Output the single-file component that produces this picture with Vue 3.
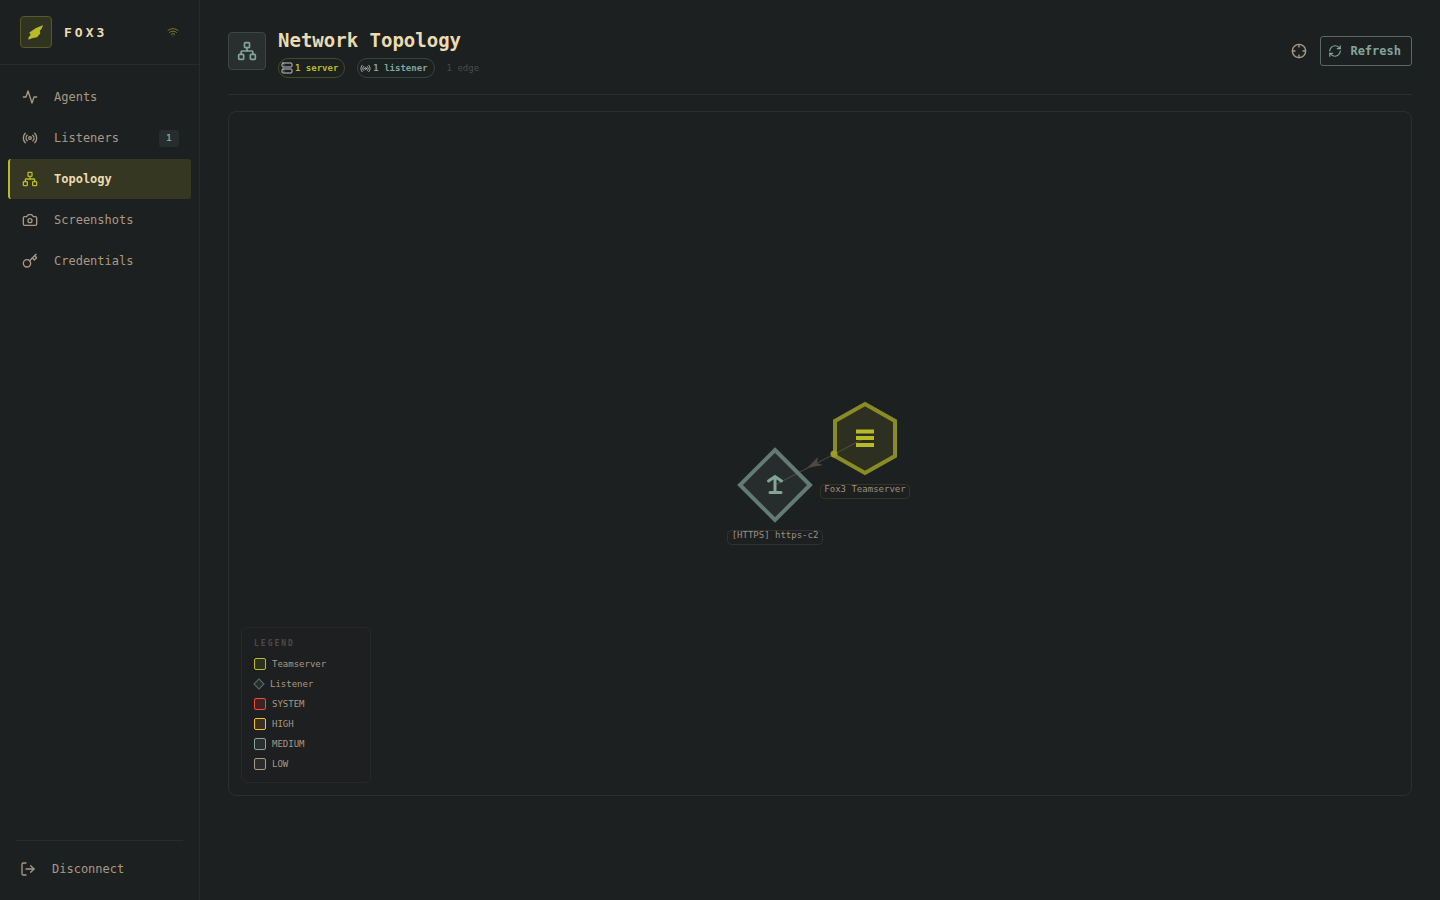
<template>
  <div class="layout">
    <aside class="sidebar">
      <div class="brand">
        <span class="brand-logo">
          <svg width="18" height="18" viewBox="0 0 18 18" aria-hidden="true">
            <path d="M16 2 13.500 3.200 9 5 6 7 2.300 9.500 3.600 12 1.500 14.500V16.800L5 15.300 10 14.300 13.300 10.500 12.800 8 15 5z" fill="#b8bb26" />
          </svg>
        </span>
        <span class="brand-name">FOX3</span>
        <svg class="icon brand-status" width="12" height="12" viewBox="0 0 24 24" aria-hidden="true">
          <path v-for="d in icons.wifi" :key="d" :d="d" />
        </svg>
      </div>

      <nav class="nav">
        <a
          v-for="item in navItems"
          :key="item.label"
          href="#"
          class="nav-item"
          :class="{ active: item.label === activePage }"
          @click.prevent="activePage = item.label"
        >
          <svg class="icon" width="16" height="16" viewBox="0 0 24 24" aria-hidden="true">
            <path v-for="d in icons[item.icon]" :key="d" :d="d" />
          </svg>
          <span>{{ item.label }}</span>
          <span v-if="item.count" class="nav-count">{{ item.count }}</span>
        </a>
      </nav>

      <div class="sidebar-footer">
        <button type="button" class="disconnect">
          <svg class="icon" width="16" height="16" viewBox="0 0 24 24" aria-hidden="true">
            <path v-for="d in icons.logout" :key="d" :d="d" />
          </svg>
          <span>Disconnect</span>
        </button>
      </div>
    </aside>

    <main class="content">
      <header class="page-header">
        <span class="page-icon">
          <svg class="icon" width="20" height="20" viewBox="0 0 24 24" aria-hidden="true">
            <path v-for="d in icons.network" :key="d" :d="d" />
          </svg>
        </span>
        <div class="page-heading">
          <h1>Network Topology</h1>
          <div class="stats">
            <span class="stat server">
              <svg class="icon" width="12" height="12" viewBox="0 0 24 24" aria-hidden="true">
                <path v-for="d in icons.server" :key="d" :d="d" />
              </svg>
              1 server
            </span>
            <span class="stat listener">
              <svg class="icon" width="11" height="11" viewBox="0 0 24 24" aria-hidden="true">
                <path v-for="d in icons.radio" :key="d" :d="d" />
              </svg>
              1 listener
            </span>
            <span class="edges">1 edge</span>
          </div>
        </div>
        <button type="button" class="center-btn" aria-label="Center graph">
          <svg class="icon" width="16" height="16" viewBox="0 0 24 24" aria-hidden="true">
            <path v-for="d in icons.crosshair" :key="d" :d="d" />
          </svg>
        </button>
        <button type="button" class="refresh-btn">
          <svg class="icon" width="14" height="14" viewBox="0 0 24 24" aria-hidden="true">
            <path v-for="d in icons.refresh" :key="d" :d="d" />
          </svg>
          Refresh
        </button>
      </header>

      <section class="graph">
        <!-- nodes are placed around the middle of the canvas -->
        <svg class="graph-canvas" width="200" height="192" viewBox="0 -32 200 192">
          <polygon points="145,14 175,31 175,66 145,83 115,66 115,31" fill="#2d2f21" stroke="#898b24" stroke-width="4" />
          <polygon points="55,60 90,95 55,130 20,95" fill="#272d2c" stroke="#627b73" stroke-width="4" />
          <path d="M145 48 55 95" stroke="#7c6f64" stroke-opacity=".5" />
          <path d="M87 78 98 67 97 73 103 75z" fill="#504943" />
          <circle cx="114" cy="64" r="3.500" fill="#9b9d25" />
          <path d="M136 41.500h18M136 48h18M136 55h18" stroke="#b8bb26" stroke-width="4" />
          <path d="M55 102V87M48.500 91 55 86.500 61.500 91M50 102.500h11" class="up-arrow" />
          <rect x="100.500" y="94.500" width="89" height="14" rx="4" fill="#1d2021" stroke="#353521" />
          <text x="145" y="102">Fox3 Teamserver</text>
          <rect x="7.500" y="140.500" width="95" height="14" rx="4" fill="#1d2021" stroke="#2c3331" />
          <text x="55" y="148">[HTTPS] https-c2</text>
        </svg>

        <div class="legend">
          <h2>LEGEND</h2>
          <ul>
            <li v-for="entry in legend" :key="entry.label">
              <span class="swatch" :class="entry.type"></span>
              {{ entry.label }}
            </li>
          </ul>
        </div>
      </section>
    </main>
  </div>
</template>

<script setup>
import { ref } from 'vue'

const activePage = ref('Topology')

const navItems = [
  { label: 'Agents', icon: 'activity' },
  { label: 'Listeners', icon: 'radio', count: 1 },
  { label: 'Topology', icon: 'network' },
  { label: 'Screenshots', icon: 'camera' },
  { label: 'Credentials', icon: 'key' }
]

const legend = [
  { label: 'Teamserver', type: 'teamserver' },
  { label: 'Listener', type: 'diamond' },
  { label: 'SYSTEM', type: 'system' },
  { label: 'HIGH', type: 'high' },
  { label: 'MEDIUM', type: 'medium' },
  { label: 'LOW', type: 'low' }
]

const icons = {
  activity: ['M22 12h-4l-3 9L9 3l-3 9H2'],
  radio: [
    'M4.9 19.1C1 15.200 1 8.800 4.900 4.900',
    'M7.8 16.200c-2.300-2.300-2.300-6.100 0-8.500',
    'M14 12a2 2 0 1 1-4 0 2 2 0 0 1 4 0z',
    'M16.200 7.800c2.300 2.300 2.300 6.100 0 8.500',
    'M19.100 4.900C23 8.800 23 15.100 19.100 19'
  ],
  network: [
    'M17 16h4a1 1 0 0 1 1 1v4a1 1 0 0 1-1 1h-4a1 1 0 0 1-1-1v-4a1 1 0 0 1 1-1z',
    'M3 16h4a1 1 0 0 1 1 1v4a1 1 0 0 1-1 1H3a1 1 0 0 1-1-1v-4a1 1 0 0 1 1-1z',
    'M10 2h4a1 1 0 0 1 1 1v4a1 1 0 0 1-1 1h-4a1 1 0 0 1-1-1V3a1 1 0 0 1 1-1z',
    'M5 16v-3a1 1 0 0 1 1-1h12a1 1 0 0 1 1 1v3',
    'M12 12V8'
  ],
  camera: [
    'M14.500 4h-5L7 7H4a2 2 0 0 0-2 2v9a2 2 0 0 0 2 2h16a2 2 0 0 0 2-2V9a2 2 0 0 0-2-2h-3z',
    'M15 13a3 3 0 1 1-6 0 3 3 0 0 1 6 0z'
  ],
  key: ['M13 15.500a5.500 5.500 0 1 1-11 0 5.500 5.500 0 0 1 11 0z', 'm21 2-9.600 9.600', 'm15.500 7.500 3 3L22 7l-3-3'],
  logout: ['M9 21H5a2 2 0 0 1-2-2V5a2 2 0 0 1 2-2h4', 'm16 17 5-5-5-5', 'M21 12H9'],
  wifi: ['M12 20h.01', 'M2 8.820a15 15 0 0 1 20 0', 'M5 12.859a10 10 0 0 1 14 0', 'M8.500 16.429a5 5 0 0 1 7 0'],
  server: [
    'M4 2h16a2 2 0 0 1 2 2v4a2 2 0 0 1-2 2H4a2 2 0 0 1-2-2V4a2 2 0 0 1 2-2z',
    'M4 14h16a2 2 0 0 1 2 2v4a2 2 0 0 1-2 2H4a2 2 0 0 1-2-2v-4a2 2 0 0 1 2-2z',
    'M6 6h.01',
    'M6 18h.01'
  ],
  crosshair: ['M22 12a10 10 0 1 1-20 0 10 10 0 0 1 20 0z', 'M22 12h-4', 'M6 12H2', 'M12 6V2', 'M12 22v-4'],
  refresh: [
    'M3 12a9 9 0 0 1 9-9 9.750 9.750 0 0 1 6.740 2.740L21 8',
    'M21 3v5h-5',
    'M21 12a9 9 0 0 1-9 9 9.750 9.750 0 0 1-6.740-2.740L3 16',
    'M8 16H3v5'
  ]
}
</script>

<style>
body {
  margin: 0;
  background: #1d2021;
}
</style>

<style scoped>
.layout {
  display: flex;
  min-height: 100vh;
  background: #1d2021;
  color: #a89984;
  font-family: 'DejaVu Sans Mono', 'Liberation Mono', monospace;
  font-size: 12px;
}
.layout * {
  box-sizing: border-box;
}
button {
  font: inherit;
  background: none;
  cursor: pointer;
}
.icon {
  flex: none;
  fill: none;
  stroke: currentColor;
  stroke-width: 2;
  stroke-linecap: round;
  stroke-linejoin: round;
}

/* sidebar */
.sidebar {
  display: flex;
  flex-direction: column;
  flex: none;
  width: 200px;
  border-right: 1px solid #282b2a;
}
.brand {
  display: flex;
  align-items: center;
  gap: 12px;
  height: 65px;
  padding: 0 20px;
  border-bottom: 1px solid #2a2d27;
}
.brand-logo {
  display: grid;
  place-items: center;
  width: 32px;
  height: 32px;
  border: 1px solid #575a22;
  border-radius: 4px;
  background: #313322;
}
.brand-name {
  color: #ebdbb2;
  font-size: 13px;
  font-weight: 700;
  letter-spacing: 3px;
}
.brand-status {
  margin-left: auto;
  color: #747724;
}
.nav {
  display: flex;
  flex-direction: column;
  gap: 1px;
  padding: 12px 8px;
}
.nav-item {
  display: flex;
  align-items: center;
  gap: 16px;
  height: 40px;
  padding: 0 12px;
  border-left: 2px solid transparent;
  border-radius: 3px;
  color: #a89984;
  text-decoration: none;
}
.nav-item.active {
  border-color: #b8bb26;
  background: #363722;
  color: #ebdbb2;
  font-weight: 700;
}
.nav-item.active .icon {
  color: #b8bb26;
}
.nav-count {
  min-width: 20px;
  margin-left: auto;
  border-radius: 3px;
  background: #272c2c;
  color: #83a598;
  font-size: 9px;
  font-weight: 700;
  line-height: 17px;
  text-align: center;
}
.sidebar-footer {
  margin: auto 16px 0;
  padding: 11px 0 14px;
  border-top: 1px solid #2b2d22;
}
.disconnect {
  display: flex;
  align-items: center;
  gap: 16px;
  width: 100%;
  height: 34px;
  padding: 0 4px;
  border: 0;
  color: #a89984;
}

/* page header */
.content {
  flex: 1;
  min-width: 0;
  padding: 28px;
}
.page-header {
  display: flex;
  align-items: center;
  height: 67px;
  padding-bottom: 20px;
  border-bottom: 1px solid #2a2e2e;
}
.page-icon {
  display: grid;
  place-items: center;
  width: 38px;
  height: 38px;
  margin-right: 12px;
  border: 1px solid #3b4745;
  border-radius: 4px;
  background: #292f2f;
  color: #83a598;
}
.page-heading {
  display: flex;
  flex-direction: column;
  gap: 6px;
  margin-right: auto;
  padding-top: 4px;
}
h1 {
  margin: 0;
  color: #ebdbb2;
  font-size: 19px;
  line-height: 24px;
}
.stats {
  display: flex;
  align-items: center;
  gap: 12px;
  font-size: 9px;
}
.stat {
  display: flex;
  align-items: center;
  gap: 2px;
  height: 20px;
  padding: 0 6px 0 2px;
  border: 1px solid;
  border-radius: 10px;
  font-weight: 700;
}
.stat .icon {
  color: #c5c5c5;
}
.stat.server {
  border-color: #484a23;
  color: #b8bb26;
}
.stat.listener {
  border-color: #39423f;
  color: #83a598;
}
.edges {
  color: #504945;
}
.center-btn {
  display: grid;
  place-items: center;
  width: 30px;
  height: 30px;
  margin-right: 6px;
  padding: 0;
  border: 0;
  color: #a89984;
}
.refresh-btn {
  display: flex;
  align-items: center;
  gap: 8px;
  height: 30px;
  padding: 0 10px 0 7px;
  border: 1px solid #566b64;
  border-radius: 3px;
  color: #83a598;
  font-weight: 700;
}

/* topology canvas */
.graph {
  position: relative;
  display: grid;
  place-items: center;
  height: calc(100vh - 215px);
  min-height: 320px;
  margin-top: 16px;
  border: 1px solid #2b2f2e;
  border-radius: 8px;
}
.graph-canvas {
  display: block;
}
.graph-canvas text {
  fill: #a08f80;
  font-size: 9px;
  text-anchor: middle;
}
.up-arrow {
  fill: none;
  stroke: #83a598;
  stroke-width: 3;
  stroke-linecap: round;
}
.legend {
  position: absolute;
  bottom: 12px;
  left: 12px;
  width: 130px;
  padding: 12px;
  border: 1px solid #292828;
  border-radius: 6px;
  background: #1e1f20;
  font-size: 9px;
}
.legend h2 {
  margin: 0 0 10px;
  color: #504945;
  font-size: 8px;
  line-height: 8px;
  letter-spacing: 2px;
}
.legend ul {
  display: flex;
  flex-direction: column;
  gap: 8px;
  margin: 0;
  padding: 0;
  list-style: none;
}
.legend li {
  display: flex;
  align-items: center;
  gap: 6px;
  height: 12px;
}
.swatch {
  width: 12px;
  height: 12px;
  border: 1px solid;
  border-radius: 2px;
}
.swatch.teamserver {
  border-color: #b8bb26;
  background: #2d2f21;
}
.swatch.diamond {
  width: 8px;
  height: 8px;
  margin: 0 1px;
  border-color: #56716a;
  border-radius: 0;
  background: #272d2c;
  transform: rotate(45deg);
}
.swatch.system {
  border-color: #fb4934;
  background: #3b2423;
}
.swatch.high {
  border-color: #fabd2f;
  background: #383023;
}
.swatch.medium {
  border-color: #83a598;
  background: #292f2f;
}
.swatch.low {
  border-color: #a89984;
  background: #2d2b2a;
}
</style>
